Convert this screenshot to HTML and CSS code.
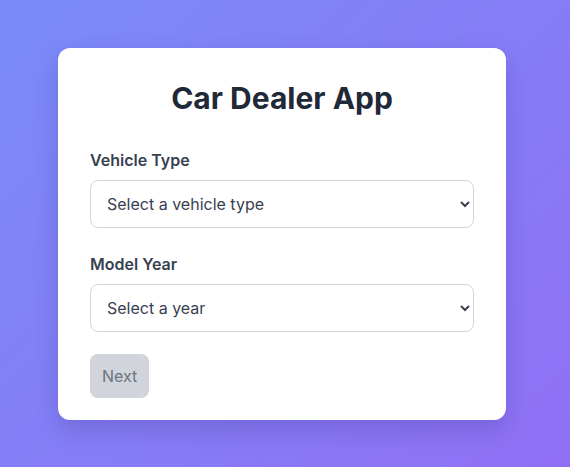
FILE: index.html
```html
<!DOCTYPE html>
<html lang="en">
<head>
<meta charset="utf-8">
<title>Car Dealer App</title>
<link rel="stylesheet" href="styles.css">
</head>
<body>
<main class="page">
  <form class="card">
    <h1 class="title">Car Dealer App</h1>
    <div class="field">
      <label class="label" for="vtype">Vehicle Type</label>
      <select class="select" id="vtype">
        <option>Select a vehicle type</option>
      </select>
    </div>
    <div class="field">
      <label class="label" for="year">Model Year</label>
      <select class="select" id="year">
        <option>Select a year</option>
      </select>
    </div>
    <div class="actions">
      <button type="button" class="btn" disabled>Next</button>
    </div>
  </form>
</main>
</body>
</html>
```

FILE: styles.css
```css
* { box-sizing: border-box; }
html, body { margin: 0; height: 100%; }
body {
  font-family: Inter, "Noto Sans", sans-serif;
  background: linear-gradient(135deg, #7a8bf9 0%, #9070f5 100%);
  color: #1f2937;
}
.page {
  min-height: 100%;
  display: flex;
  align-items: center;
  justify-content: center;
  padding-right: 6px;
}
.card {
  width: 448px;
  background: #ffffff;
  border-radius: 12px;
  padding: 32px 32px 22px;
  box-shadow: 0 10px 25px rgba(30, 20, 90, 0.18);
  display: flex;
  flex-direction: column;
}
.title {
  margin: 0 0 32px;
  font-size: 30px;
  line-height: 36px;
  font-weight: 700;
  text-align: center;
  color: #1f2937;
}
.field {
  display: flex;
  flex-direction: column;
  gap: 8px;
}
.field + .field { margin-top: 24px; }
.label {
  font-size: 16px;
  line-height: 24px;
  font-weight: 600;
  color: #374151;
}
.select {
  height: 48px;
  width: 100%;
  padding: 0 18px 0 12px;
  border: 1px solid #d1d5db;
  border-radius: 8px;
  background: #ffffff;
  font-family: inherit;
  font-size: 16px;
  color: #374151;
}
.actions {
  display: flex;
  margin-top: 22px;
}
.btn {
  height: 44px;
  padding: 0 12px;
  border: none;
  border-radius: 8px;
  background: #d1d5db;
  color: #6b7280;
  font-family: inherit;
  font-size: 16px;
}
```
